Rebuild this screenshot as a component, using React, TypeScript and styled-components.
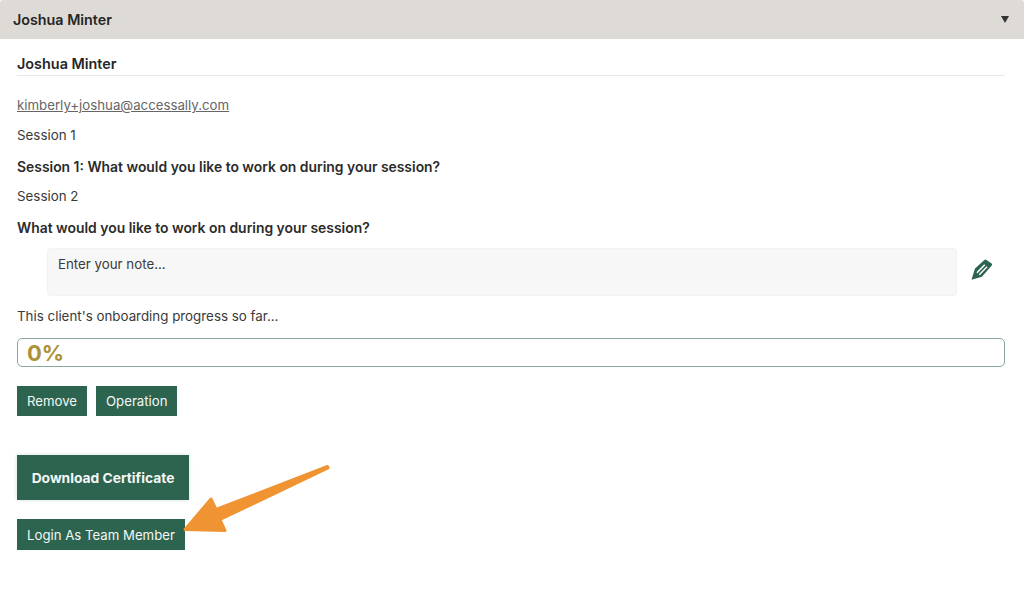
import React from 'react';
import styled, { createGlobalStyle } from 'styled-components';

const GlobalStyle = createGlobalStyle`
  html, body {
    margin: 0;
    padding: 0;
    background: #fff;
    overflow: hidden;
  }
  * {
    box-sizing: border-box;
  }
`;

const PencilIcon: React.FC = () => (
  <S.EditIcon viewBox="0 0 22 22" aria-hidden="true">
    <path
      fillRule="evenodd"
      d="M13.4 1 Q14.4 .1 15.5 .9 L20.6 4.4 Q21.6 5.3 20.8 6.4 L10.9 17.7 L1.4 20.6 Q.6 20.8 .7 20 L4 9.4 Z M13.2 5.2 L5.4 13.2 L6.5 14.3 L14.3 6.3 Z M15.6 7.2 L7.8 15.2 L8.8 16.2 L16.6 8.2 Z"
    />
  </S.EditIcon>
);

const App: React.FC = () => {
  return (
    <S.Page>
      <GlobalStyle />
      <S.Header>
        <S.HeaderTitle>Joshua Minter</S.HeaderTitle>
        <S.Caret />
      </S.Header>
      <S.Content>
        <S.MemberName>Joshua Minter</S.MemberName>
        <S.Email href="#">kimberly+joshua@accessally.com</S.Email>
        <S.Text $top={13}>Session 1</S.Text>
        <S.Question $top={16}>Session 1: What would you like to work on during your session?</S.Question>
        <S.Text $top={13}>Session 2</S.Text>
        <S.Question $top={16}>What would you like to work on during your session?</S.Question>
        <S.NoteRow>
          <S.NoteBox>Enter your note...</S.NoteBox>
          <PencilIcon />
        </S.NoteRow>
        <S.Text $top={12}>This client's onboarding progress so far...</S.Text>
        <S.ProgressBar>
          <S.ProgressValue>0%</S.ProgressValue>
        </S.ProgressBar>
        <S.ButtonRow>
          <S.Button>Remove</S.Button>
          <S.Button>Operation</S.Button>
        </S.ButtonRow>
        <S.CertificateButton>Download Certificate</S.CertificateButton>
        <S.LoginButton>Login As Team Member</S.LoginButton>
      </S.Content>
      <S.Arrow viewBox="0 0 1024 589" aria-hidden="true">
        <path
          d="M185 529.5 L211 499 L216 509.5 L327.5 466.5 L328 468 L220 519.5 L225 530.5 Z"
          fill="#f09433"
          stroke="#f09433"
          strokeWidth="3"
          strokeLinejoin="round"
        />
      </S.Arrow>
    </S.Page>
  );
};

export default App;

const S = {
  Page: styled.div`
    position: relative;
    width: 1024px;
    height: 589px;
    overflow: hidden;
    font-family: Inter, 'Liberation Sans', sans-serif;
    color: #2b2b2b;
    background: #fff;
  `,
  Header: styled.div`
    display: flex;
    align-items: center;
    justify-content: space-between;
    height: 39px;
    padding: 0 13px;
    background: #dedbd6;
    border-radius: 3px 3px 0 0;
  `,
  HeaderTitle: styled.div`
    font-size: 14.3px;
    font-weight: 600;
    color: #262626;
  `,
  Caret: styled.div`
    width: 0;
    height: 0;
    margin-right: 2px;
    border-left: 4px solid transparent;
    border-right: 4px solid transparent;
    border-top: 7px solid #333;
  `,
  Content: styled.div`
    display: flex;
    flex-direction: column;
    align-items: flex-start;
    padding: 16px 19px 0 17px;
  `,
  MemberName: styled.div`
    align-self: stretch;
    height: 21px;
    font-size: 14.4px;
    line-height: 18px;
    font-weight: 600;
    color: #262626;
    border-bottom: 1px solid #e8e8e8;
  `,
  Email: styled.a`
    margin-top: 20px;
    font-size: 13.25px;
    line-height: 18px;
    color: #666;
    text-decoration: underline;
  `,
  Text: styled.div<{ $top: number }>`
    margin-top: ${({ $top }) => $top}px;
    font-size: 13.35px;
    line-height: 16px;
    color: #3a3a3a;
  `,
  Question: styled.div<{ $top: number }>`
    margin-top: ${({ $top }) => $top}px;
    font-size: 13.9px;
    line-height: 16px;
    font-weight: 600;
    color: #2b2b2b;
  `,
  NoteRow: styled.div`
    display: flex;
    align-items: center;
    align-self: stretch;
    margin-top: 12px;
    padding-left: 30px;
  `,
  NoteBox: styled.div`
    width: 910px;
    height: 48px;
    padding: 7px 10px;
    font-size: 13.3px;
    line-height: 16px;
    color: #3a3a3a;
    background: #f7f7f7;
    border: 1px solid #f2f2f2;
    border-radius: 4px;
  `,
  EditIcon: styled.svg`
    width: 22px;
    height: 22px;
    margin: 0 0 4px 14px;
    fill: #2d6450;
  `,
  ProgressBar: styled.div`
    display: flex;
    align-items: center;
    align-self: stretch;
    height: 29px;
    margin-top: 14px;
    padding: 0 9px;
    background: #fff;
    border: 1px solid #8aa8a0;
    border-radius: 5px;
  `,
  ProgressValue: styled.span`
    font-size: 22px;
    font-weight: 700;
    color: #ab9138;
  `,
  ButtonRow: styled.div`
    display: flex;
    gap: 9px;
    margin-top: 19px;
  `,
  Button: styled.button`
    height: 30px;
    padding: 0 10px;
    font-family: inherit;
    font-size: 13.2px;
    color: #f4f7f5;
    background: #2d6450;
    border: 0;
    border-radius: 0;
  `,
  CertificateButton: styled.button`
    width: 172px;
    height: 45px;
    margin-top: 39px;
    padding: 0;
    font-family: inherit;
    font-size: 13.8px;
    font-weight: 700;
    color: #f4f7f5;
    background: #2d6450;
    border: 0;
    box-shadow: 0 0 4px rgba(45, 100, 80, 0.2);
  `,
  LoginButton: styled.button`
    width: 168px;
    height: 31px;
    margin-top: 19px;
    padding: 0;
    font-family: inherit;
    font-size: 13.2px;
    color: #f4f7f5;
    background: #2d6450;
    border: 0;
  `,
  Arrow: styled.svg`
    position: absolute;
    inset: 0;
    width: 1024px;
    height: 589px;
    pointer-events: none;
  `,
};
